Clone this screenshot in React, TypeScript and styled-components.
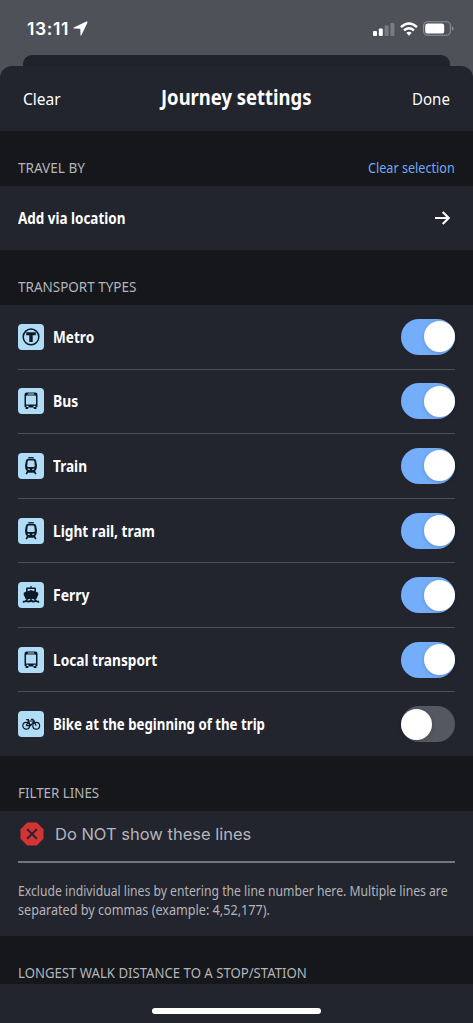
import React from "react";
import styled, { createGlobalStyle } from "styled-components";

const Global = createGlobalStyle`
  * { box-sizing: border-box; }
  body { margin: 0; background: #22242e; }
  button { border: 0; padding: 0; background: none; text-align: left; }
`;

const Screen = styled.div`
  width: 473px;
  height: 1023px;
  overflow: hidden;
  display: flex;
  flex-direction: column;
  background: #4f5159;
  color: #fff;
  font-family: "Noto Sans", "Open Sans", sans-serif;
`;

const StatusBar = styled.div`
  flex: none;
  height: 55px;
  padding: 2px 19px 0 27px;
  display: flex;
  align-items: center;
  justify-content: space-between;
`;

const Clock = styled.div`
  display: flex;
  align-items: center;
  gap: 4px;
  font: 600 17.5px/22px Inter, sans-serif;
  letter-spacing: 0.65px;
`;

const Indicators = styled.div`
  display: flex;
  align-items: center;
  gap: 5px;
`;

const BackCard = styled.div`
  flex: none;
  height: 11px;
  margin: 0 23px;
  border-radius: 9px 9px 0 0;
  background: #20222c;
`;

const Sheet = styled.main`
  flex: 1;
  display: flex;
  flex-direction: column;
  border-radius: 12px 12px 0 0;
  overflow: hidden;
  background: #22242e;
`;

const Header = styled.header`
  flex: none;
  height: 65px;
  padding: 0 23px;
  display: grid;
  grid-template-columns: 1fr auto 1fr;
  align-items: center;
  > :nth-child(2) { margin-bottom: 3px; }
  > :last-child { justify-self: end; }
`;

const Label = styled.span<{ $size: number; $w: number; $squeeze: number; $bold?: boolean; $color?: string }>`
  display: block;
  width: ${(p) => p.$w}px;
  font-size: ${(p) => p.$size}px;
  line-height: 22px;
  font-weight: ${(p) => (p.$bold ? 700 : 400)};
  color: ${(p) => p.$color ?? "#fff"};
  white-space: nowrap;
  transform: scaleX(${(p) => p.$squeeze});
  transform-origin: 0 50%;
`;

const SectionHead = styled.div<{ $height: number; $bottom: number }>`
  flex: none;
  height: ${(p) => p.$height}px;
  padding: 0 18px ${(p) => p.$bottom}px;
  display: flex;
  align-items: flex-end;
  justify-content: space-between;
  background: #15171b;
`;

const LinkRow = styled.button`
  flex: none;
  height: 64px;
  padding: 0 22px 0 18px;
  display: flex;
  align-items: center;
  justify-content: space-between;
  font-family: inherit;
`;

const List = styled.div`
  flex: none;
  height: 451px;
  padding: 0 18px;
  display: flex;
  flex-direction: column;
`;

const Row = styled.div`
  flex: 1;
  display: flex;
  align-items: center;
  & + & { border-top: 1px solid #4d4f5a; }
`;

const IconTile = styled.div`
  width: 26px;
  height: 26px;
  margin-right: 8.5px;
  border-radius: 4px;
  background: #b0dcf6;
  svg { display: block; }
`;

const Toggle = styled.button<{ $on: boolean }>`
  width: 54px;
  height: 36px;
  margin-left: auto;
  border-radius: 18px;
  display: flex;
  align-items: center;
  justify-content: ${(p) => (p.$on ? "flex-end" : "flex-start")};
  background: ${(p) => (p.$on ? "#74aefb" : "#565861")};
`;

const Knob = styled.span`
  width: 31px;
  height: 31px;
  border-radius: 50%;
  background: #fff;
  box-shadow: 0 1px 4px rgba(0, 0, 0, 0.18);
`;

const Filter = styled.div`
  flex: none;
  height: 125px;
  padding: 0 18px;
`;

const Field = styled.div`
  height: 51.5px;
  padding: 0 0 4px 2px;
  display: flex;
  align-items: center;
  gap: 11px;
  border-bottom: 2px solid #74767e;
  font: 400 16.5px/22px Inter, sans-serif;
  color: #b5b6bd;
`;

const Help = styled.div`
  padding-top: 18px;
  display: flex;
  flex-direction: column;
  > span { line-height: 19px; }
`;

const HomeBar = styled.div`
  flex: none;
  width: 169px;
  height: 6px;
  margin: 24px auto 0;
  border-radius: 3px;
  background: #fff;
`;

const ink = "#0c1a28";

const MetroIcon = () => (
  <svg width="26" height="26" viewBox="0 0 26 26">
    <circle cx="13" cy="12.9" r="7.8" fill="none" stroke={ink} strokeWidth="1.5" />
    <path d="M8.2 8.3h9.6v3h-3.1v6.8h-3.4v-6.800H8.2z" fill={ink} />
  </svg>
);

const BusIcon = () => (
  <svg width="26" height="26" viewBox="0 0 26 26">
    <path fillRule="evenodd" fill={ink} d="M8.6 4.6h8.8q2.1 0 2.1 2.1v12.300h-1v2h-2.700v-1.600h-5.600v1.600H7.500v-2h-1V6.700q0-2.100 2.100-2.100zM9.800 5.500v.9h6.400v-.9zM8.900 7.500q-.9 0-.9.900v8.200h10V8.400q0-.9-.9-.9zM8.500 17.700v1.300h2v-1.300zM15.500 17.700v1.300h2v-1.300z" />
  </svg>
);

const TrainIcon = () => (
  <svg width="26" height="26" viewBox="0 0 26 26">
    <path d="M10.300 4.700h5.400" stroke={ink} strokeWidth="1.200" />
    <path d="M8.200 21.200l2-3.700M17.800 21.200l-2-3.700" stroke={ink} strokeWidth="1.700" />
    <path fillRule="evenodd" fill={ink} d="M10.300 5.700h5.400q2 0 2.500 2.200l.8 4.600q.3 3.900-2.300 6.200l-1.300 1h-4.800l-1.300-1q-2.600-2.300-2.300-6.200l.8-4.600q.5-2.200 2.500-2.200zM10.700 7.600q-.8 0-1 .8l-.5 4.300q0 1.200 1.200 1.200h5.200q1.200 0 1.200-1.200l-.5-4.300q-.2-.8-1-.8zM9.500 16.300l1.900.9.500-1.100-1.900-.7zM16.500 16.300l-1.900.9-.5-1.100 1.900-.7z" />
  </svg>
);

const FerryIcon = () => (
  <svg width="26" height="26" viewBox="0 0 26 26">
    <path fillRule="evenodd" fill={ink} d="M12.400 3.900h1.200v1.600h3.200q1.200 0 1.200 1.200v3.100l2.300.9v2.100l-2 4.400-1.600.9-1.900-1.300-1.800 1.300-1.800-1.300-1.900 1.300-1.600-.9-2-4.400v-2.100l2.300-.9V6.700q0-1.200 1.200-1.200h3.200zM9.700 7v2.300l3.300-1.200 3.300 1.200V7z" />
    <path d="M4.800 19.800q2.100.2 3.600-1.200 2.200 2 4.600 0 2.400 2 4.600 0 1.500 1.400 3.600 1.200" fill="none" stroke={ink} strokeWidth="1.900" />
  </svg>
);

const BikeIcon = () => (
  <svg width="26" height="26" viewBox="0 0 26 26" fill="none" stroke={ink} strokeWidth="1.200">
    <circle cx="8.200" cy="14.700" r="3.400" />
    <circle cx="18.200" cy="14.700" r="3.400" />
    <path d="M8.200 14.700l2.300-4.700h5.600l-3.400 4.700H8.200M12.700 14.700l-3-5.900M8.200 8.700h2.800M18.200 14.700l-3.200-6.300h-2.100" />
  </svg>
);

const LocationIcon = () => (
  <svg width="15" height="15" viewBox="0 0 15 15">
    <path d="M13.300.6L.9 6.500Q-.2 7.300 1 7.500L7.300 7.700 7.500 14Q7.700 15.200 8.500 14.100L14.400 1.700Q14.700.2 13.300.6Z" fill="#fff" />
  </svg>
);

const SignalIcon = () => (
  <svg width="22" height="14" viewBox="0 0 22 14" fill="#fff">
    <rect x="0" y="9" width="4" height="5" rx="1" />
    <rect x="5.800" y="6.500" width="4" height="7.500" rx="1" />
    <rect x="11.600" y="3.500" width="4" height="10.500" rx="1" opacity=".25" />
    <rect x="17.400" y="1" width="4" height="13" rx="1" opacity=".25" />
  </svg>
);

const WifiIcon = () => (
  <svg width="18" height="14" viewBox="0 0 18 14" fill="none" stroke="#fff" strokeWidth="2.500">
    <path d="M1 5.100Q9-2.100 17 5.100M4 8.400q5-4.200 10 0" />
    <path d="M9 13.700l-2.700-2.900q2.700-2 5.400 0z" fill="#fff" stroke="none" />
  </svg>
);

const BatteryIcon = () => (
  <svg width="31" height="15" viewBox="0 0 31 15">
    <rect x=".6" y=".8" width="26.800" height="13.400" rx="4" fill="none" stroke="#8f9096" strokeWidth="1.100" />
    <rect x="2.200" y="2.500" width="19" height="10" rx="2.600" fill="#fff" />
    <path d="M29 5.200q1.500.8 1.500 2.300T29 9.800z" fill="#8f9096" />
  </svg>
);

const ArrowIcon = () => (
  <svg width="16" height="14" viewBox="0 0 16 14" fill="none" stroke="#fff" strokeWidth="2.200">
    <path d="M-.5 7h14M7.700 1l6 6-6 6" />
  </svg>
);

const StopIcon = () => (
  <svg width="24" height="24" viewBox="0 0 24 24">
    <path d="M7.200.5h9.600l6.700 6.700v9.600l-6.700 6.700H7.200L.5 16.800V7.200z" fill="#d23434" />
    <path d="M7.100 7.100l9.800 9.800M16.900 7.100l-9.800 9.800" stroke="#22202a" strokeWidth="1.900" />
  </svg>
);

const transports = [
  { name: "Metro", Icon: MetroIcon, on: true, squeeze: 0.85 },
  { name: "Bus", Icon: BusIcon, on: true, squeeze: 0.87 },
  { name: "Train", Icon: TrainIcon, on: true, squeeze: 0.85 },
  { name: "Light rail, tram", Icon: TrainIcon, on: true, squeeze: 0.857 },
  { name: "Ferry", Icon: FerryIcon, on: true, squeeze: 0.87 },
  { name: "Local transport", Icon: BusIcon, on: true, squeeze: 0.855 },
  { name: "Bike at the beginning of the trip", Icon: BikeIcon, on: false, squeeze: 0.828 },
];

const muted = "#b4b5ba";

export default function App() {
  return (
    <Screen>
      <Global />
      <StatusBar>
        <Clock>13:11 <LocationIcon /></Clock>
        <Indicators><SignalIcon /><WifiIcon /><BatteryIcon /></Indicators>
      </StatusBar>
      <BackCard />
      <Sheet>
        <Header>
          <Label $size={17} $w={38} $squeeze={0.915}>Clear</Label>
          <Label $size={21} $w={151} $squeeze={0.878} $bold>Journey settings</Label>
          <Label $size={17} $w={38} $squeeze={0.885}>Done</Label>
        </Header>
        <SectionHead $height={55} $bottom={8}>
          <Label $size={14.5} $w={67} $squeeze={0.935} $color={muted}>TRAVEL BY</Label>
          <Label $size={14.5} $w={87} $squeeze={0.87} $color="#74a9f2">Clear selection</Label>
        </SectionHead>
        <LinkRow>
          <Label $size={16} $w={107} $squeeze={0.84} $bold>Add via location</Label>
          <ArrowIcon />
        </LinkRow>
        <SectionHead $height={55} $bottom={8}>
          <Label $size={14.5} $w={119} $squeeze={0.93} $color={muted}>TRANSPORT TYPES</Label>
        </SectionHead>
        <List>
          {transports.map(({ name, Icon, on, squeeze }) => (
            <Row key={name}>
              <IconTile><Icon /></IconTile>
              <Label $size={16} $w={212} $squeeze={squeeze} $bold>{name}</Label>
              <Toggle $on={on} aria-label={name}><Knob /></Toggle>
            </Row>
          ))}
        </List>
        <SectionHead $height={55} $bottom={8}>
          <Label $size={14.5} $w={82} $squeeze={0.92} $color={muted}>FILTER LINES</Label>
        </SectionHead>
        <Filter>
          <Field><StopIcon />Do NOT show these lines</Field>
          <Help>
            <Label $size={14.5} $w={430} $squeeze={0.84} $color={muted}>Exclude individual lines by entering the line number here. Multiple lines are</Label>
            <Label $size={14.5} $w={252} $squeeze={0.87} $color={muted}>separated by commas (example: 4,52,177).</Label>
          </Help>
        </Filter>
        <SectionHead $height={48} $bottom={1}>
          <Label $size={14.5} $w={290} $squeeze={0.908} $color={muted}>LONGEST WALK DISTANCE TO A STOP/STATION</Label>
        </SectionHead>
        <HomeBar />
      </Sheet>
    </Screen>
  );
}
